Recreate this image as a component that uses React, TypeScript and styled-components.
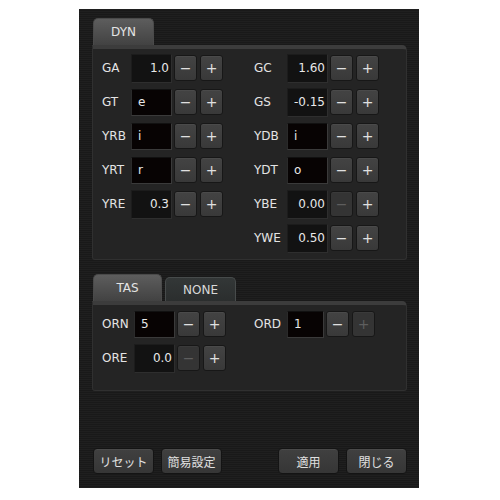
import styled, { createGlobalStyle } from "styled-components";

const GlobalStyle = createGlobalStyle`
  html, body {
    margin: 0;
    padding: 0;
    background: #ffffff;
  }
  * {
    box-sizing: border-box;
  }
`;

type FieldData = {
  label: string;
  value: string;
  kind: "num" | "text";
  minusOff?: boolean;
  plusOff?: boolean;
  inputWidth?: number;
};

const dynLeft: FieldData[] = [
  { label: "GA", value: "1.0", kind: "num" },
  { label: "GT", value: "e", kind: "text" },
  { label: "YRB", value: "i", kind: "text" },
  { label: "YRT", value: "r", kind: "text" },
  { label: "YRE", value: "0.3", kind: "num" },
];

const dynRight: FieldData[] = [
  { label: "GC", value: "1.60", kind: "num" },
  { label: "GS", value: "-0.15", kind: "num" },
  { label: "YDB", value: "i", kind: "text" },
  { label: "YDT", value: "o", kind: "text" },
  { label: "YBE", value: "0.00", kind: "num", minusOff: true },
  { label: "YWE", value: "0.50", kind: "num" },
];

const tasLeft: FieldData[] = [
  { label: "ORN", value: "5", kind: "text" },
  { label: "ORE", value: "0.0", kind: "num", minusOff: true },
];

const tasRight: FieldData[] = [
  { label: "ORD", value: "1", kind: "text", plusOff: true, inputWidth: 37 },
];

const Field = ({ f, labelWidth }: { f: FieldData; labelWidth: number }) => (
  <Row>
    <Label $w={labelWidth}>{f.label}</Label>
    <ValueBox $kind={f.kind} $w={f.inputWidth ?? 41}>
      {f.value}
    </ValueBox>
    <StepBtn $off={f.minusOff}>−</StepBtn>
    <StepBtn $off={f.plusOff}>+</StepBtn>
  </Row>
);

const App = (): JSX.Element => {
  return (
    <>
      <GlobalStyle />
      <Frame>
        <Tabs>
          <Tab $active $w={61}>DYN</Tab>
        </Tabs>
        <Panel $h={215}>
          <Column>
            {dynLeft.map((f) => (
              <Field key={f.label} f={f} labelWidth={29} />
            ))}
          </Column>
          <Column>
            {dynRight.map((f) => (
              <Field key={f.label} f={f} labelWidth={33} />
            ))}
          </Column>
        </Panel>

        <Tabs $top={14}>
          <Tab $active $w={69}>TAS</Tab>
          <Tab $w={71}>NONE</Tab>
        </Tabs>
        <Panel $h={90}>
          <Column>
            {tasLeft.map((f) => (
              <Field key={f.label} f={f} labelWidth={32} />
            ))}
          </Column>
          <Column>
            {tasRight.map((f) => (
              <Field key={f.label} f={f} labelWidth={33} />
            ))}
          </Column>
        </Panel>

        <Footer>
          <BtnGroup>
            <ActionBtn>リセット</ActionBtn>
            <ActionBtn>簡易設定</ActionBtn>
          </BtnGroup>
          <BtnGroup>
            <ActionBtn>適用</ActionBtn>
            <ActionBtn>閉じる</ActionBtn>
          </BtnGroup>
        </Footer>
      </Frame>
    </>
  );
};

const Frame = styled.div`
  margin: 9px 0 0 79px;
  width: 340px;
  height: 479px;
  padding: 9px 12px 14px 13px;
  display: flex;
  flex-direction: column;
  background: repeating-linear-gradient(
    to bottom,
    #1f1f1f 0px,
    #1f1f1f 1px,
    #191919 1px,
    #191919 2px
  );
  font-family: "DejaVu Sans", "Noto Sans CJK JP", sans-serif;
  font-size: 12px;
  color: #dedede;
`;

const Tabs = styled.div<{ $top?: number }>`
  display: flex;
  align-items: flex-end;
  gap: 3px;
  height: 27px;
  padding-left: 1px;
  margin-top: ${(p) => p.$top ?? 0}px;
`;

const Tab = styled.div<{ $active?: boolean; $w: number }>`
  width: ${(p) => p.$w}px;
  height: ${(p) => (p.$active ? 27 : 24)}px;
  display: flex;
  align-items: center;
  justify-content: center;
  border-radius: 5px 5px 0 0;
  font-size: 12px;
  color: ${(p) => (p.$active ? "#e4e4e4" : "#d8d8d8")};
  background: ${(p) =>
    p.$active
      ? "linear-gradient(to bottom, #5d5d5d, #424242)"
      : "linear-gradient(to bottom, #333737, #2b2e2e)"};
  border: 1px solid ${(p) => (p.$active ? "#4a4a4a" : "#474b4b")};
  border-bottom: none;
`;

const Panel = styled.div<{ $h: number }>`
  width: 315px;
  height: ${(p) => p.$h}px;
  display: flex;
  padding: 2px 0 0 9px;
  background: #242424;
  border: 1px solid #303030;
  border-top: 4px solid #3c3c3c;
  border-radius: 0 5px 3px 3px;
`;

const Column = styled.div`
  width: 154px;
  display: flex;
  flex-direction: column;
`;

const Row = styled.div`
  height: 34px;
  display: flex;
  align-items: center;
`;

const Label = styled.div<{ $w: number }>`
  width: ${(p) => p.$w}px;
  flex-shrink: 0;
  color: #e4e4e4;
`;

const ValueBox = styled.div<{ $kind: "num" | "text"; $w: number }>`
  width: ${(p) => p.$w}px;
  height: ${(p) => (p.$kind === "num" ? 29 : 27)}px;
  display: flex;
  align-items: center;
  justify-content: ${(p) => (p.$kind === "num" ? "flex-end" : "flex-start")};
  padding: 0 2px 0 6px;
  margin-right: 2px;
  font-size: 12px;
  color: #e8e8e8;
  background: ${(p) => (p.$kind === "num" ? "#121212" : "#070303")};
  border: 1px solid;
  border-color: ${(p) =>
    p.$kind === "num"
      ? "#1c1c1c #2e2e2e #2e2e2e #1c1c1c"
      : "#111111 #3a3a3a #3a3a3a #2a2a2a"};
`;

const StepBtn = styled.div<{ $off?: boolean }>`
  width: 23px;
  height: 26px;
  margin-right: 3px;
  display: flex;
  align-items: center;
  justify-content: center;
  font-size: 14px;
  color: ${(p) => (p.$off ? "#5e5e5e" : "#e0e0e0")};
  background: ${(p) =>
    p.$off
      ? "#343434"
      : "linear-gradient(to bottom, #434343, #393939)"};
  border: 1px solid #171717;
  border-radius: 3px;
  box-shadow: inset 0 1px 0 ${(p) => (p.$off ? "#3a3a3a" : "#4a4a4a")};
`;

const Footer = styled.div`
  margin-top: auto;
  display: flex;
  justify-content: space-between;
  padding-left: 1px;
`;

const BtnGroup = styled.div`
  display: flex;
  gap: 7px;
`;

const ActionBtn = styled.div`
  width: 61px;
  height: 26px;
  display: flex;
  align-items: center;
  justify-content: center;
  font-family: "Noto Sans CJK JP", sans-serif;
  font-size: 12px;
  color: #e0e0e0;
  background: linear-gradient(to bottom, #404040, #363636);
  border: 1px solid #141414;
  border-radius: 4px;
  box-shadow: inset 0 1px 0 #4a4a4a;
`;

export default App;
